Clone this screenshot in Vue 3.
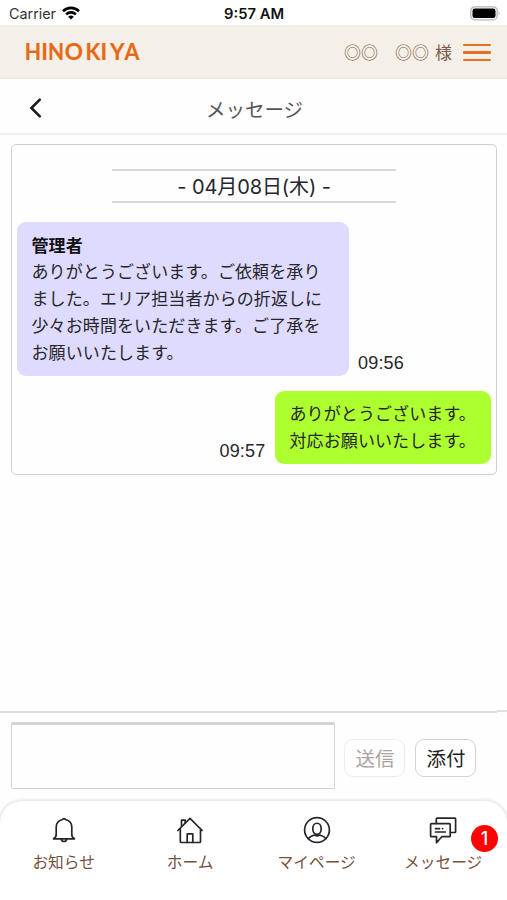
<script setup>
const incoming = ['ありがとうございます。ご依頼を承り', 'ました。エリア担当者からの折返しに', '少々お時間をいただきます。ご了承を', 'お願いいたします。']
const outgoing = ['ありがとうございます。', '対応お願いいたします。']
// centre and horizontal scale of every letter in the wordmark
const wordmark = [
  ['H', 8, 0.94], ['I', 19.6, 1], ['N', 31, 0.93], ['O', 48.8, 1],
  ['K', 68, 0.96], ['I', 78.8, 1], ['Y', 92.2, 1], ['A', 107, 0.96]
]
const tabs = [
  { id: 'news', label: 'お知らせ' },
  { id: 'home', label: 'ホーム' },
  { id: 'mypage', label: 'マイページ' },
  { id: 'message', label: 'メッセージ', badge: 1 }
]
</script>

<template>
  <div class="screen">
    <div class="status">
      <div class="carrier">
        <svg width="53" height="25" viewBox="0 0 53 25"><text x="0" y="19" textLength="47" lengthAdjust="spacingAndGlyphs">Carrier</text></svg>
        <svg class="wifi" width="18" height="14" viewBox="0 0 18 14" fill="none" stroke="#000" stroke-width="2.6">
          <path d="M1 5.2C5.6.8 12.4.8 17 5.2" /><path d="M4.1 8.4c2.8-2.7 7-2.7 9.8 0" /><path d="M9 13.5 6.2 10.7c1.6-1.5 4-1.5 5.6 0Z" fill="#000" stroke="none" />
        </svg>
      </div>
      <svg class="clock" width="60" height="25" viewBox="0 0 60 25"><text x="0" y="19" textLength="60" lengthAdjust="spacingAndGlyphs">9:57 AM</text></svg>
      <svg class="battery" width="31" height="15" viewBox="0 0 31 15"><rect x=".8" y=".8" width="26.4" height="13" rx="4" fill="#fff" stroke="#b5b5b5" stroke-width="1.3" /><rect x="2.5" y="2.5" width="23" height="9.6" rx="2.3" /><path d="M28.6 5.2q2 2 0 4.2z" fill="#aaa" /></svg>
    </div>

    <header class="brandbar">
      <svg class="logo" width="115" height="22" viewBox="0 0 115 22"><text v-for="([ch, cx, sx], i) in wordmark" :key="i" :transform="`translate(${cx} 19) scale(${sx} 1)`">{{ ch }}</text></svg>
      <div class="user"><span class="name">◎◎</span><span class="name">◎◎</span><span class="san">様</span></div>
      <div class="menu"><i /><i /><i /></div>
    </header>

    <div class="titlebar">
      <svg class="back" width="14" height="22" viewBox="0 0 14 22" fill="none" stroke="#1c1c20" stroke-width="2.6" stroke-linecap="round"><path d="M10.8 2.600 2.4 11l8.400 8.400" /></svg>
      <h1>メッセージ</h1>
    </div>

    <main>
      <section class="thread">
        <div class="date"><span>- 04月08日(木) -</span></div>
        <div class="row">
          <div class="bubble in"><b>管理者</b><p v-for="l in incoming" :key="l">{{ l }}</p></div>
          <time>09:56</time>
        </div>
        <div class="row mine">
          <time>09:57</time>
          <div class="bubble out"><p v-for="l in outgoing" :key="l">{{ l }}</p></div>
        </div>
      </section>
    </main>

    <div class="rule"><i /><i /></div>
    <div class="composer">
      <div class="input" />
      <button class="btn off">送信</button>
      <button class="btn">添付</button>
    </div>

    <nav>
      <div v-for="t in tabs" :key="t.id" class="tab">
        <svg width="28" height="28" viewBox="0 0 28 28" fill="none" stroke="#25252b" stroke-width="1.7" stroke-linejoin="round" stroke-linecap="round">
          <template v-if="t.id === 'news'">
            <path d="M3.500 22.800c2-1 2.700-2 2.700-4V11c0-4 2.600-6.500 6.300-7.500q1.500-1.800 3 0c3.700 1 6.300 3.500 6.300 7.500v7.800c0 2 .7 3 2.700 4z" />
            <path d="M11.300 22.800c.4 3.600 5 3.600 5.400 0" />
          </template>
          <template v-else-if="t.id === 'home'">
            <path d="M1.900 14.500 14 2.300l12.100 12.200M4.300 12.600v12.900q0 1 1 1h18.200q1 0 1-1V12.600" />
            <path d="M5.500 10.300V4.200h3.700v2.500M11.200 26.300v-8.500h5.600v8.500" />
          </template>
          <template v-else-if="t.id === 'mypage'">
            <circle cx="14" cy="14" r="12.400" />
            <path d="M9.800 12.500c0-7 8.400-7 8.400 0 0 3.200-1.500 5.800-4.200 5.800S9.800 15.700 9.800 12.500Z" />
            <path d="M5.300 22.700c1.400-2.200 3.700-3 6.200-3.700 1.700 1.200 3.700 1.200 5.400 0 2.500.7 4.600 1.500 6 3.600" />
          </template>
          <template v-else>
            <path d="M7.300 7.500V3q0-.8.8-.8h17.700q.8 0 .8.800v12.700q0 .8-.8.800h-4" />
            <path d="M2.400 7.700h18q.8 0 .8.800v11.400q0 .8-.8.800h-7.600l-5.300 6v-6H2.400q-.8 0-.8-.8V8.500q0-.8.8-.8zM6.500 12.600h4M6.500 16h9.800M13.500 12.600h.2" />
          </template>
        </svg>
        <span class="label">{{ t.label }}</span>
        <span v-if="t.badge" class="badge">{{ t.badge }}</span>
      </div>
    </nav>
  </div>
</template>

<style>
body { margin: 0; background: #fff; }
</style>

<style scoped>
* { box-sizing: border-box; }
.screen { width: 507px; height: 900px; display: flex; flex-direction: column; overflow: hidden; background: #fefefe; color: #26262b; font-family: "Noto Sans CJK JP", sans-serif; }
.status { height: 25px; flex: none; display: grid; grid-template-columns: 1fr 60px 1fr; background: #fff; }
.carrier { display: flex; padding-left: 9px; }
.carrier text { font: 14.500px Inter, sans-serif; fill: #333; }
.wifi { margin-top: 6px; }
.clock text { font: 600 14.500px Inter, sans-serif; fill: #111; }
.battery { justify-self: end; margin: 6px 6px 0 0; }
.brandbar { height: 54px; flex: none; display: flex; align-items: center; background: #f4f0e8; border-bottom: 1px solid #e8e5de; padding: 0 16px 0 25px; }
.logo { margin-top: 1px; overflow: visible; }
.logo text { font: 700 22.500px Lato, sans-serif; fill: #e66a16; stroke: #e66a16; stroke-width: .2; text-anchor: middle; }
.user { margin-left: auto; display: flex; align-items: center; color: #805a49; font-size: 17px; line-height: 24px; }
.name { margin-right: 17px; }
.name + .name { margin-right: 6px; }
.menu { display: flex; flex-direction: column; gap: 5px; width: 28px; margin: 2px 0 0 11px; }
.menu i { height: 2.300px; background: #e47124; border-radius: 1px; }
.titlebar { height: 56px; flex: none; display: grid; grid-template-columns: 60px 1fr 60px; align-items: center; border-bottom: 2px solid #f2f0ea; }
.back { margin: 4px 0 0 29px; }
h1 { margin: 5px 0 0 2px; font-size: 19.500px; line-height: 28px; font-weight: 400; text-align: center; color: #555; }
main { flex: 1; padding: 9px 10px 0 11px; }
.thread { height: 331px; border: 1.500px solid #d0d0d0; border-radius: 5px; padding: 24px 5px 0; }
.date { width: 284px; height: 34px; margin: 0 auto 0 95px; padding-top: 1px; border: solid #d8d8d8; border-width: 2px 0; display: flex; align-items: center; justify-content: center; font: 20px/30px Inter, "Noto Sans CJK JP", sans-serif; letter-spacing: -.1px; white-space: nowrap; }
.row { display: flex; align-items: flex-end; margin-top: 19px; }
.mine { justify-content: flex-end; margin-top: 15px; }
.bubble { padding: 9.700px 14px 0 14.500px; border-radius: 9px; font-size: 17px; line-height: 26.800px; letter-spacing: .1px; white-space: nowrap; }
.bubble b { display: block; color: #111; }
.bubble p { margin: 0; }
.in { width: 332px; height: 154px; background: #dedbff; }
.out { width: 216px; height: 73px; padding-top: 9px; background: #adff2f; }
time { font: 18px/26px "Liberation Sans", sans-serif; letter-spacing: .2px; margin: 0 9px 0; }
.mine time { margin-right: 9.500px; }
.rule { height: 4px; flex: none; display: flex; align-items: flex-end; }
.rule i { width: 497px; height: 2px; background: #e0e0e0; }
.rule i + i { width: 10px; margin-bottom: 1px; }
.composer { height: 88px; flex: none; display: flex; align-items: center; padding: 0 11px 3px; }
.input { width: 324px; height: 67px; border: 1.500px solid #d5d5d5; border-top: 3px solid #d4d4d4; border-radius: 2px; margin-right: 9.400px; }
.btn { width: 61px; height: 38px; margin: 4px 10px 0 0; padding: 0; border: 1.500px solid #d3d3d3; border-radius: 9px; background: #fff; color: #222; font: 19.500px/34px "Noto Sans CJK JP", sans-serif; }
.off { color: #aaa49f; border-color: #ececec; }
nav { height: 99px; flex: none; display: grid; grid-template-columns: repeat(4, 126.500px); border-radius: 22px 22px 0 0; background: #fff; box-shadow: 0 0 4px #ccc; padding-left: .4px; }
.tab { position: relative; display: flex; flex-direction: column; align-items: center; padding-top: 15px; }
.label { margin-top: 6px; font-size: 15.700px; line-height: 24px; color: #75513d; }
.badge { position: absolute; left: 91px; top: 24px; width: 27px; height: 27px; border-radius: 50%; background: #fb0505; color: #fff; font: 500 18px/27px Inter, sans-serif; text-align: center; }
</style>
